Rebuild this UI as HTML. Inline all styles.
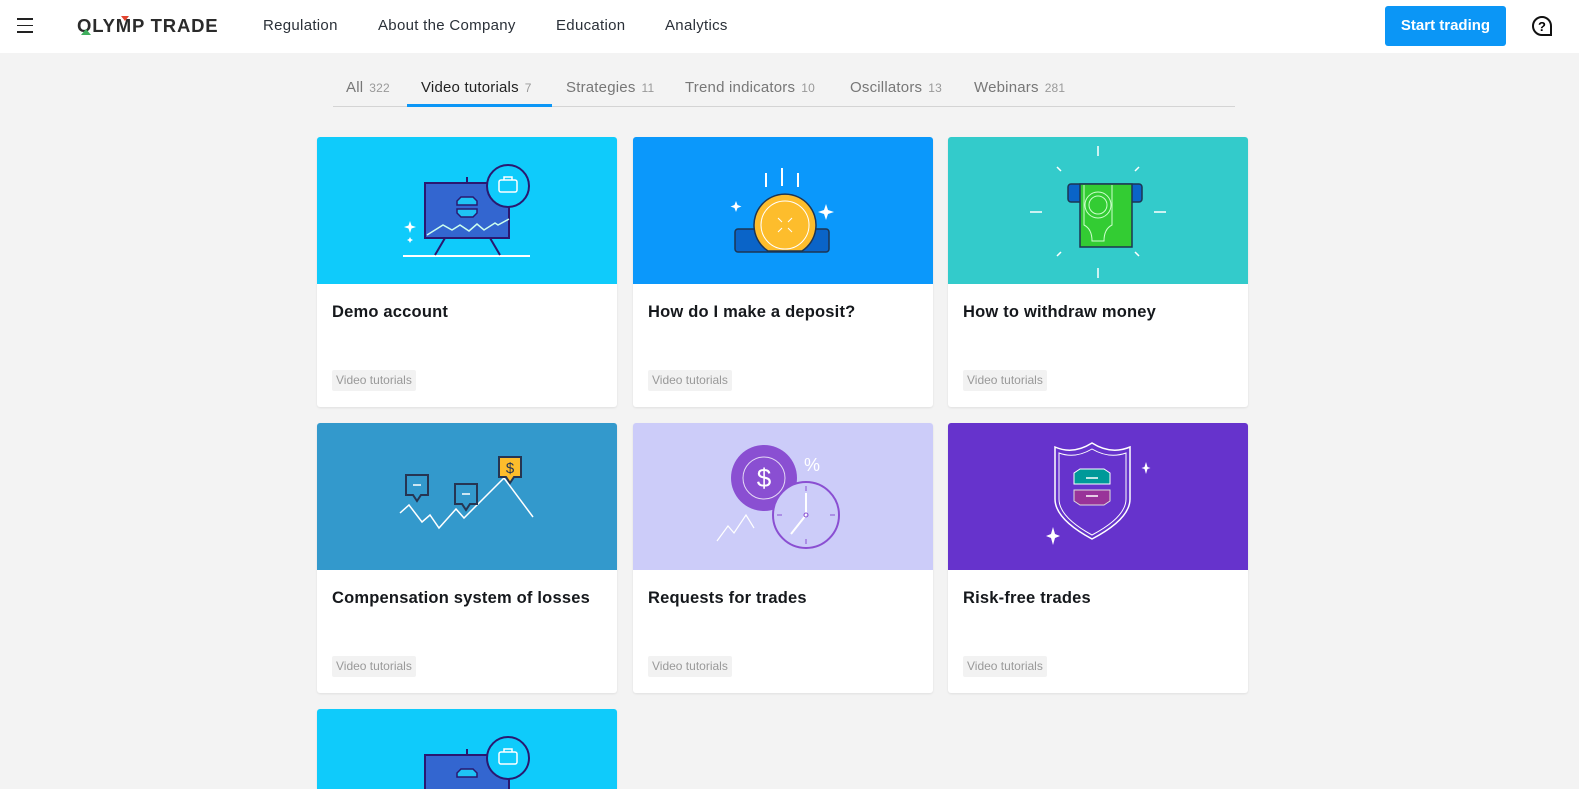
<!DOCTYPE html>
<html><head><meta charset="utf-8"><style>
*{margin:0;padding:0;box-sizing:border-box}
html,body{width:1579px;height:789px;overflow:hidden}
body{position:relative;background:#f3f3f3;font-family:"Liberation Sans","DejaVu Sans",sans-serif;color:#1f2328}
.nav{position:absolute;left:0;top:0;width:1579px;height:53px;background:#fff}
.ham{position:absolute;left:17px;top:18px;width:16px}
.ham i{display:block;height:1.5px;background:#222;margin-bottom:5px}
.logo{position:absolute;left:77px;top:15px;font-weight:bold;font-size:18.5px;letter-spacing:.8px;color:#2b2b2b}
.menu{position:absolute;top:17px;font-size:15px;color:#2a3038;letter-spacing:.3px}
.btn{position:absolute;left:1385px;top:6px;width:121px;height:40px;background:#0b96f6;border-radius:3px;color:#fff;font-weight:bold;font-size:15px;text-align:center;line-height:40px}
.help{position:absolute;left:1531px;top:15px}
.tabs{position:absolute;left:333px;top:70px;width:902px;height:37px;border-bottom:1px solid #d4d4d4}
.tab{position:absolute;top:9px;font-size:15px;color:#777;letter-spacing:.2px}
.tab small{font-size:12px;color:#999;margin-left:6px}
.tab.a{color:#222}
.ul{position:absolute;left:74px;top:34px;width:145px;height:3px;background:#0b96f6}
.card{position:absolute;width:300px;height:270px;background:#fff;border-radius:3px;overflow:hidden;box-shadow:0 1px 2px rgba(0,0,0,.08)}
.card svg{display:block;width:300px;height:147px}
.card h3{position:absolute;left:15px;top:166px;font-size:16.5px;font-weight:bold;color:#15181c;letter-spacing:.2px}
.tag{position:absolute;left:15px;top:233px;height:21px;padding:0 4px;background:#f2f2f2;font-size:12px;line-height:21px;color:#999;border-radius:2px}
</style></head><body>
<div class="nav">
<div class="ham"><i></i><i></i><i></i></div>
<div class="logo">OLYMP TRADE</div>
<svg style="position:absolute;left:77px;top:12px" width="140" height="24"><polygon points="4,23 9,17 14,23" fill="#3fae5d"/><polygon points="44,4 52,4 48,9" fill="#e3442f"/></svg>
<div class="menu" style="left:263px">Regulation</div>
<div class="menu" style="left:378px">About the Company</div>
<div class="menu" style="left:556px">Education</div>
<div class="menu" style="left:665px">Analytics</div>
<div class="btn">Start trading</div>
<svg class="help" width="22" height="22" viewBox="0 0 22 22"><path d="M11 2a9 9 0 1 0 0 18h9v-9A9 9 0 0 0 11 2z" fill="none" stroke="#111" stroke-width="2"/><text x="11" y="16" font-size="13" font-weight="bold" text-anchor="middle" font-family="Liberation Sans">?</text></svg>
</div>
<div class="tabs">
<div class="tab" style="left:13px">All<small>322</small></div>
<div class="tab a" style="left:88px">Video tutorials<small>7</small></div>
<div class="tab" style="left:233px">Strategies<small>11</small></div>
<div class="tab" style="left:352px">Trend indicators<small>10</small></div>
<div class="tab" style="left:517px">Oscillators<small>13</small></div>
<div class="tab" style="left:641px">Webinars<small>281</small></div>
<div class="ul"></div>
</div>

<div class="card" style="left:317px;top:137px">
<svg viewBox="0 0 300 147"><rect width="300" height="147" fill="#0fcbfb"/>
<line x1="86" y1="119" x2="213" y2="119" stroke="#fff" stroke-width="2"/>
<line x1="128" y1="101" x2="118" y2="118" stroke="#2a1870" stroke-width="2"/><line x1="173" y1="101" x2="183" y2="118" stroke="#2a1870" stroke-width="2"/>
<line x1="150" y1="40" x2="150" y2="46" stroke="#2a1870" stroke-width="2"/>
<rect x="108" y="46" width="84" height="55" fill="#3366d0" stroke="#2a1870" stroke-width="2"/>
<polyline points="110,98 126,88 135,93 143,88 152,94 160,87 167,93 178,86 181,88 192,82" fill="none" stroke="#cfe" stroke-width="1.5"/>
<path d="M140 64l4-4h12l4 4v4h-20z M140 72h20v4l-4 4h-12l-4-4z" fill="#1fc3f5" stroke="#2a1870" stroke-width="1.5"/>
<circle cx="191" cy="49" r="21" fill="#0fcbfb" stroke="#2a1870" stroke-width="2"/>
<rect x="182" y="43" width="18" height="12" rx="2" fill="none" stroke="#fff" stroke-width="1.5"/><path d="M187 43v-3h8v3" fill="none" stroke="#fff" stroke-width="1.5"/>
<path d="M93 84l1.5 4.5 4.5 1.5-4.5 1.5-1.5 4.5-1.5-4.5-4.5-1.5 4.5-1.5z M93 100l1 2 2 1-2 1-1 2-1-2-2-1 2-1z" fill="#fff"/>
</svg>
<h3>Demo account</h3><div class="tag">Video tutorials</div></div>

<div class="card" style="left:633px;top:137px">
<svg viewBox="0 0 300 147"><rect width="300" height="147" fill="#0b98fb"/>
<rect x="102" y="92" width="94" height="23" rx="3" fill="#0a64c8" stroke="#1d3553" stroke-width="1.5"/>
<path d="M135 114A31 31 0 1 1 169 114Z" fill="#fdbd2c" stroke="#1d3553" stroke-width="1.5"/>
<circle cx="152" cy="88" r="24" fill="none" stroke="#fff" stroke-width="1"/>
<path d="M145 81l4 4M159 81l-4 4M145 95l4-4M159 95l-4-4" stroke="#fff" stroke-width="1"/>
<path d="M133 36v14M149 31v18M165 36v14" stroke="#fff" stroke-width="2"/>
<path d="M103 64l1.5 4 4 1.5-4 1.5-1.5 4-1.5-4-4-1.5 4-1.5z M193 67l2 6 6 2-6 2-2 6-2-6-6-2 6-2z" fill="#fff"/>
</svg>
<h3>How do I make a deposit?</h3><div class="tag">Video tutorials</div></div>

<div class="card" style="left:948px;top:137px">
<svg viewBox="0 0 300 147"><rect width="300" height="147" fill="#33cbcb"/>
<rect x="120" y="47" width="74" height="18" rx="3" fill="#0a64c8" stroke="#1d3553" stroke-width="1.5"/>
<rect x="132" y="47" width="52" height="63" fill="#33cc33" stroke="#1d3553" stroke-width="1.5"/>
<circle cx="150" cy="68" r="13" fill="none" stroke="#cfc" stroke-width="1"/><circle cx="150" cy="68" r="9" fill="none" stroke="#cfc" stroke-width="1"/>
<path d="M136 48v40q8 4 8 16h12q0-12 8-16v-40" fill="none" stroke="#cfc" stroke-width="1"/>
<g stroke="#fff" stroke-width="1.5"><path d="M150 9v10M150 131v10M82 75h12M206 75h12M109 30l4 4M191 30l-4 4M109 119l4-4M191 119l-4-4"/></g>
</svg>
<h3>How to withdraw money</h3><div class="tag">Video tutorials</div></div>

<div class="card" style="left:317px;top:423px">
<svg viewBox="0 0 300 147"><rect width="300" height="147" fill="#3399cc"/>
<polyline points="83,90 92,82 105,99 113,92 122,105 139,86 147,95 187,55 216,94" fill="none" stroke="#fff" stroke-width="1.5"/>
<path d="M89 52h22v20h-7l-4 6-4-6h-7z" fill="#3399cc" stroke="#263552" stroke-width="2"/><path d="M96 62h8" stroke="#fff" stroke-width="1.5"/>
<path d="M138 61h22v20h-7l-4 6-4-6h-7z" fill="#3399cc" stroke="#263552" stroke-width="2"/><path d="M145 71h8" stroke="#fff" stroke-width="1.5"/>
<path d="M182 34h22v20h-7l-4 6-4-6h-7z" fill="#fdbd2c" stroke="#263552" stroke-width="2"/>
<text x="193" y="50" font-size="15" text-anchor="middle" fill="#263552" font-family="Liberation Sans">$</text>
</svg>
<h3>Compensation system of losses</h3><div class="tag">Video tutorials</div></div>

<div class="card" style="left:633px;top:423px">
<svg viewBox="0 0 300 147"><rect width="300" height="147" fill="#ccccf9"/>
<polyline points="84,118 95,103 101,110 113,92 121,105" fill="none" stroke="#fff" stroke-width="1.2"/>
<circle cx="131" cy="55" r="33" fill="#8a4fd2"/><circle cx="131" cy="55" r="21" fill="none" stroke="#e5d9f5" stroke-width="1"/>
<text x="131" y="64" font-size="26" text-anchor="middle" fill="#fff" font-family="Liberation Sans">$</text>
<circle cx="173" cy="92" r="33" fill="#ccccf9" stroke="#8a4fd2" stroke-width="2"/>
<path d="M173 63v5M173 116v5M144 92h5M197 92h5" stroke="#8a4fd2" stroke-width="1"/>
<path d="M173 92v-22M173 92l-15 19" stroke="#fff" stroke-width="2"/><circle cx="173" cy="92" r="2" fill="none" stroke="#8a4fd2"/>
<text x="179" y="48" font-size="18" text-anchor="middle" fill="#fff" font-family="Liberation Sans">%</text>
</svg>
<h3>Requests for trades</h3><div class="tag">Video tutorials</div></div>

<div class="card" style="left:948px;top:423px">
<svg viewBox="0 0 300 147"><rect width="300" height="147" fill="#6633cc"/>
<path d="M107 24q18 8 37 -4q19 12 38 4v52q0 20 -38 40q-37-20-37-40z" fill="none" stroke="#fff" stroke-width="1.5"/>
<path d="M111 30q16 6 33 -4q17 10 34 4v46q0 18 -34 36q-33-18-33-36z" fill="none" stroke="#fff" stroke-width="1"/>
<path d="M126 50l6-4h24l6 4v11h-36z" fill="#009999" stroke="#fff" stroke-width="1"/><path d="M138 55h12" stroke="#fff" stroke-width="1.5"/>
<path d="M126 67h36v11l-6 4h-24l-6-4z" fill="#993399" stroke="#ddd" stroke-width="1"/><path d="M138 73h12" stroke="#fff" stroke-width="1.5"/>
<path d="M198 39l1.5 5 3 1-3 1-1.5 5-1.5-5-3-1 3-1z M105 104l2 7 5 2-5 2-2 7-2-7-5-2 5-2z" fill="#fff"/>
</svg>
<h3>Risk-free trades</h3><div class="tag">Video tutorials</div></div>

<div class="card" style="left:317px;top:709px;height:80px;border-radius:3px 3px 0 0">
<svg viewBox="0 0 300 147"><rect width="300" height="147" fill="#0fcbfb"/>
<line x1="150" y1="40" x2="150" y2="46" stroke="#2a1870" stroke-width="2"/>
<rect x="108" y="46" width="84" height="55" fill="#3366d0" stroke="#2a1870" stroke-width="2"/>
<path d="M140 64l4-4h12l4 4v4h-20z" fill="#1fc3f5" stroke="#2a1870" stroke-width="1.5"/>
<circle cx="191" cy="49" r="21" fill="#0fcbfb" stroke="#2a1870" stroke-width="2"/>
<rect x="182" y="43" width="18" height="12" rx="2" fill="none" stroke="#fff" stroke-width="1.5"/><path d="M187 43v-3h8v3" fill="none" stroke="#fff" stroke-width="1.5"/>
</svg></div>
</body></html>
